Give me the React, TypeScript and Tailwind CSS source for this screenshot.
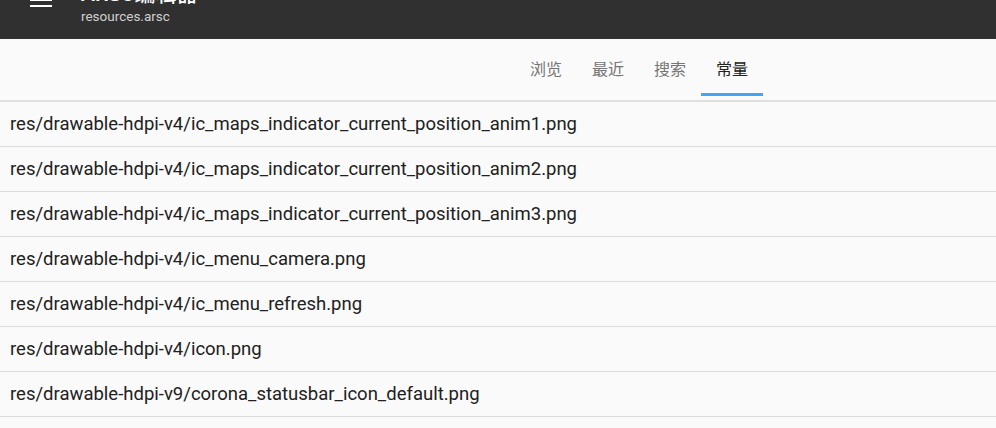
import React from 'react';

const tabs = ['浏览', '最近', '搜索', '常量'];

const files = [
  'res/drawable-hdpi-v4/ic_maps_indicator_current_position_anim1.png',
  'res/drawable-hdpi-v4/ic_maps_indicator_current_position_anim2.png',
  'res/drawable-hdpi-v4/ic_maps_indicator_current_position_anim3.png',
  'res/drawable-hdpi-v4/ic_menu_camera.png',
  'res/drawable-hdpi-v4/ic_menu_refresh.png',
  'res/drawable-hdpi-v4/icon.png',
  'res/drawable-hdpi-v9/corona_statusbar_icon_default.png',
  'res/drawable-hdpi-v9/corona_statusbar_icon_default_large.png',
];

export default function App() {
  const active = 3;
  return (
    <div
      className="w-[996px] h-[428px] overflow-hidden bg-[#fafafa]"
      style={{ fontFamily: 'Roboto, "Noto Sans CJK SC", sans-serif' }}
    >
      {/* App bar, scrolled partly off the top */}
      <div className="-mt-[22px] h-[61px] bg-[#303030] flex items-start relative z-10">
        <div className="w-[81px] pl-[30px] pt-[15px]">
          <div className="flex flex-col gap-[4px]">
            <span className="block w-[22px] h-[2px] bg-white" />
            <span className="block w-[22px] h-[2px] bg-white" />
            <span className="block w-[22px] h-[2px] bg-white" />
          </div>
        </div>
        <div className="flex flex-col pt-[4px]">
          <span className="text-[21px] leading-[24px] font-medium text-white">ARSC编辑器</span>
          <span className="mt-[2px] text-[13.5px] leading-[16px] text-[#cfcfcf]">resources.arsc</span>
        </div>
      </div>

      {/* Tabs */}
      <div className="h-[63px] flex border-b-2 border-[#e0e0e0] pl-[515px]">
        {tabs.map((t, i) => (
          <div
            key={t}
            className={`relative w-[62px] flex items-center justify-center text-[16px] ${
              i === active ? 'text-[#212121]' : 'text-[#757575]'
            }`}
          >
            {t}
            {i === active && (
              <span className="absolute left-0 right-0 bottom-[4px] h-[3px] bg-[#42a5f5]" />
            )}
          </div>
        ))}
      </div>

      {/* File list */}
      <div className="flex flex-col">
        {files.map(f => (
          <div
            key={f}
            className="h-[45px] flex items-center pl-[10px] pt-[2px] border-b border-[#dcdcdc] text-[18.5px] text-[#212121]"
          >
            {f}
          </div>
        ))}
      </div>
    </div>
  );
}
